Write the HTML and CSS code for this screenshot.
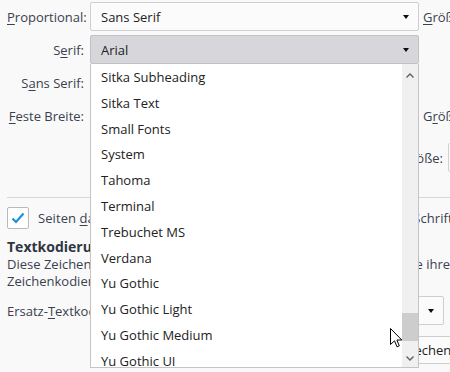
FILE: index.html
```html
<!DOCTYPE html>
<html lang="de">
<head>
    <meta charset="UTF-8">
    <title>Schriftarten</title>
    <link rel="stylesheet" href="styles.css">
</head>
<body>
    <div class="dialog">
        <div class="fonts">
            <label class="lbl"><u>P</u>roportional:</label>
            <div class="select"><span>Sans Serif</span><i class="arrow"></i></div>
            <label class="size"><u>G</u>röße:</label>

            <label class="lbl">S<u>e</u>rif:</label>
            <div class="select open"><span>Arial</span><i class="arrow"></i></div>
            <span></span>

            <label class="lbl">S<u>a</u>ns Serif:</label>
            <div class="select"><span>Arial</span><i class="arrow"></i></div>
            <span></span>

            <label class="lbl"><u>F</u>este Breite:</label>
            <div class="select"><span>Consolas</span><i class="arrow"></i></div>
            <label class="size">G<u>r</u>öße:</label>
        </div>

        <div class="min-row">
            <label>Minimale Schriftgröße:</label>
            <div class="select small"><span>Keine</span><i class="arrow"></i></div>
        </div>

        <div class="sep"></div>

        <div class="check-row">
            <span class="checkbox">
                <svg width="14" height="12" viewBox="0 0 14 12"><path d="M1.5 6.5 L5 10 L12.5 1.5" fill="none" stroke="#1f8fdc" stroke-width="2.2"/></svg>
            </span>
            <label>Seiten <u>d</u>as Verwenden von eigenen statt der oben gewählten Schriftarten erlauben</label>
        </div>

        <h4>Textkodierung für veraltete Inhalte</h4>
        <p class="desc">Diese Zeichenkodierung wird für veraltete Inhalte verwendet, welche ihre<br>Zeichenkodierung nicht angeben.</p>

        <div class="enc-row">
            <label>Ersatz-<u>T</u>extkodierung:</label>
            <div class="select enc"><span>Standard für aktuelle Sprache</span><i class="arrow"></i></div>
        </div>

        <div class="buttons">
            <button>OK</button>
            <button>Abbrechen</button>
        </div>

        <!-- geöffnete Liste vom Serif-Menü -->
        <div class="listbox">
            <ul>
                <li>Sitka Subheading</li>
                <li>Sitka Text</li>
                <li>Small Fonts</li>
                <li>System</li>
                <li>Tahoma</li>
                <li>Terminal</li>
                <li>Trebuchet MS</li>
                <li>Verdana</li>
                <li>Yu Gothic</li>
                <li>Yu Gothic Light</li>
                <li>Yu Gothic Medium</li>
                <li>Yu Gothic UI</li>
            </ul>
            <div class="scrollbar">
                <svg class="chev" width="8" height="5" viewBox="0 0 8 5"><path d="M0.5 4.5 L4 1 L7.5 4.5" fill="none" stroke="#606060" stroke-width="1.4"/></svg>
                <div class="track"><div class="thumb"></div></div>
                <svg class="chev" width="8" height="5" viewBox="0 0 8 5"><path d="M0.5 0.5 L4 4 L7.5 0.5" fill="none" stroke="#606060" stroke-width="1.4"/></svg>
            </div>
        </div>

        <svg class="cursor" width="13" height="20" viewBox="0 0 13 20"><path d="M0.5 0.5 L0.5 16.5 L4.5 12.8 L7 18.8 L9.3 17.8 L6.9 12 L11.8 12 Z" fill="#fff" stroke="#000" stroke-width="1"/></svg>
    </div>
</body>
</html>
```

FILE: styles.css
```css
html, body {
    margin: 0;
    padding: 0;
}
body {
    background: #f9f9fa;
    font-family: "Open Sans", "Noto Sans", sans-serif;
    font-size: 13px;
    color: #39414e;
    overflow: hidden;
}
.dialog {
    position: relative;
    width: 640px;
    height: 372px;
    padding: 2px 0 0 7px;
    box-sizing: border-box;
}
u {
    text-decoration: underline;
    text-underline-offset: 2px;
}

/* Schriftarten-Raster */
.fonts {
    display: grid;
    grid-template-columns: 83px 329px auto;
    row-gap: 4px;
    align-items: center;
}
.lbl {
    text-align: right;
    padding-right: 6px;
    white-space: nowrap;
}
.size {
    padding-left: 4px;
    white-space: nowrap;
}
.select {
    height: 29px;
    box-sizing: border-box;
    border: 1px solid #cfcfd1;
    border-radius: 2px;
    background: #fbfbfb;
    display: flex;
    align-items: center;
    justify-content: space-between;
    padding: 0 9px 0 10px;
    color: #222;
    white-space: nowrap;
    overflow: hidden;
}
.select.open {
    background: #d7d7db;
    border-color: #c2c2c5;
}
.arrow {
    width: 0;
    height: 0;
    border-left: 3.5px solid transparent;
    border-right: 3.5px solid transparent;
    border-top: 4px solid #0c0c0d;
    flex: none;
}

.min-row {
    display: flex;
    align-items: center;
    margin-top: 13px;
}
.min-row label {
    width: 436px;
    text-align: right;
    white-space: nowrap;
}
.select.small {
    width: 90px;
    margin-left: 5px;
}

.sep {
    height: 1px;
    background: #d7d7db;
    margin-top: 25px;
}

.check-row {
    display: flex;
    align-items: center;
    margin-top: 9px;
    white-space: nowrap;
}
.check-row label {
    letter-spacing: 0.08px;
}
.checkbox {
    width: 22px;
    height: 22px;
    box-sizing: border-box;
    border: 1px solid #b9b9bb;
    border-radius: 2px;
    background: #fff;
    display: flex;
    align-items: center;
    justify-content: center;
    margin-right: 9px;
    flex: none;
}

h4 {
    margin: 9px 0 0;
    font-size: 14px;
    line-height: 18px;
    font-weight: bold;
    color: #2f3642;
    white-space: nowrap;
}
.desc {
    margin: 0;
    line-height: 17px;
    white-space: nowrap;
}

.enc-row {
    display: flex;
    align-items: center;
    width: 437px;
    margin-top: 6px;
}
.enc-row label {
    flex: 1;
    white-space: nowrap;
}
.select.enc {
    width: 230px;
}

.buttons {
    display: flex;
    gap: 8px;
    margin: 11px 0 0 277px;
}
.buttons button {
    height: 28px;
    min-width: 80px;
    padding: 0 12px;
    font: inherit;
    color: #222;
    background: #fbfbfb;
    border: 1px solid #cfcfd1;
    border-radius: 2px;
}

/* aufgeklappte Liste */
.listbox {
    position: absolute;
    left: 90px;
    top: 64px;
    width: 329px;
    height: 304px;
    box-sizing: border-box;
    border: 1px solid #c4c4c6;
    border-top: none;
    background: #fff;
    display: flex;
}
.listbox ul {
    flex: 1;
    list-style: none;
    margin: 0;
    padding: 1px 0 0;
    overflow: hidden;
}
.listbox li {
    height: 25.8px;
    line-height: 25.8px;
    padding-left: 10px;
    color: #222;
    white-space: nowrap;
}
.scrollbar {
    width: 16px;
    background: #f0f0f0;
    display: flex;
    flex-direction: column;
    align-items: center;
}
.chev {
    flex: none;
    margin: 9px 0;
}
.scrollbar .chev:last-child {
    margin: 0 0 6px;
}
.track {
    flex: 1;
    width: 100%;
    position: relative;
}
.thumb {
    position: absolute;
    left: 0;
    right: 0;
    top: 226px;
    height: 28px;
    background: #cdcdcd;
}
.cursor {
    position: absolute;
    left: 390px;
    top: 328px;
}
```
